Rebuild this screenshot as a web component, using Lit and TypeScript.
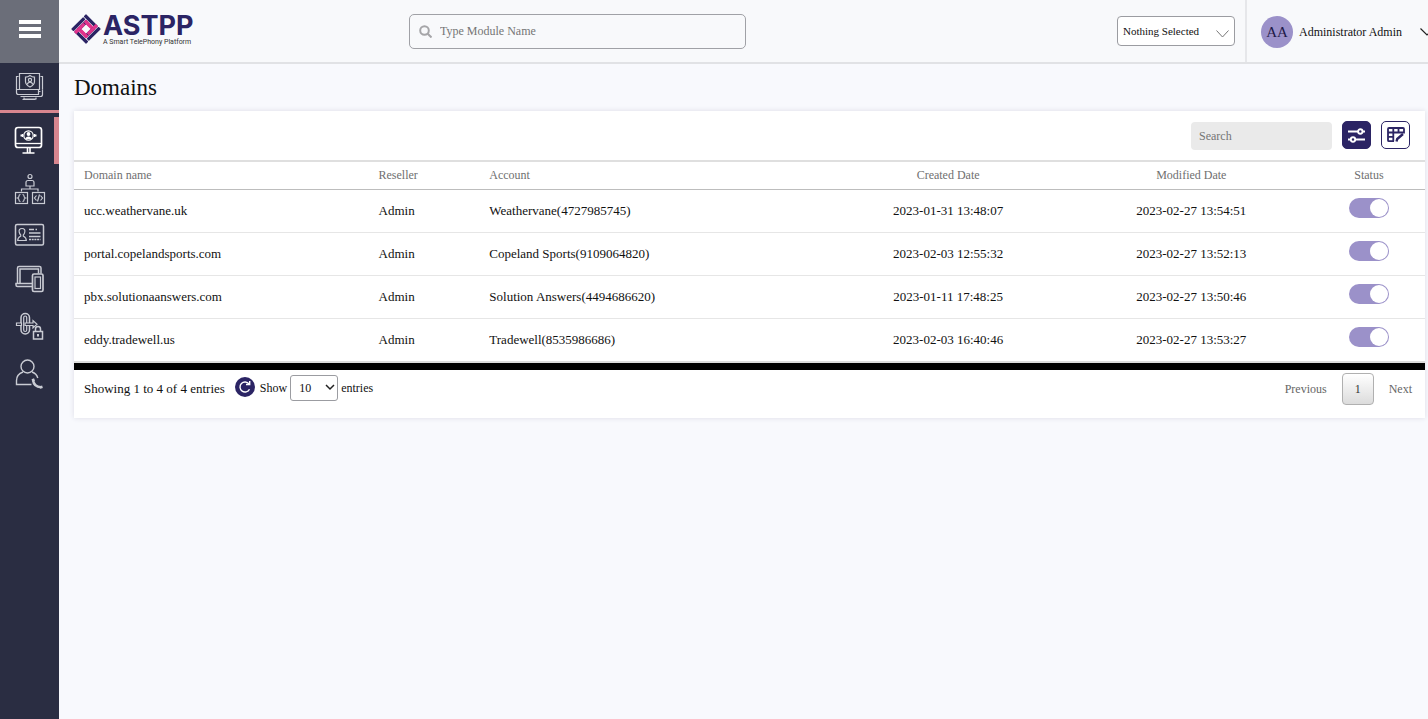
import { LitElement, html, css, svg } from "lit";
import { customElement, state } from "lit/decorators.js";

interface Domain {
  name: string;
  reseller: string;
  account: string;
  created: string;
  modified: string;
  active: boolean;
}

const DOMAINS: Domain[] = [
  { name: "ucc.weathervane.uk", reseller: "Admin", account: "Weathervane(4727985745)", created: "2023-01-31 13:48:07", modified: "2023-02-27 13:54:51", active: true },
  { name: "portal.copelandsports.com", reseller: "Admin", account: "Copeland Sports(9109064820)", created: "2023-02-03 12:55:32", modified: "2023-02-27 13:52:13", active: true },
  { name: "pbx.solutionaanswers.com", reseller: "Admin", account: "Solution Answers(4494686620)", created: "2023-01-11 17:48:25", modified: "2023-02-27 13:50:46", active: true },
  { name: "eddy.tradewell.us", reseller: "Admin", account: "Tradewell(8535986686)", created: "2023-02-03 16:40:46", modified: "2023-02-27 13:53:27", active: true },
];

// Each drawing uses a 59 x 47 box, the size of one sidebar entry.
const NAV = [
  {
    label: "Dashboard",
    art: svg`
      <path d="M19.500 11.500v-1h20v16h-20z M18.500 13.500h-2v13 M40.500 13.500h2v13"/>
      <path d="M16.500 26.500h22v5h-20a2 2 0 0 1-2-2z M42.500 26.500v5a2 2 0 0 1-2 2h-20 M38.500 28.500h2"/>
      <path d="M24 34.500v1.500h12v-1.500 M22.500 36.500h13"/>
      <path d="M30 12.500c1.500 1.200 3 1.700 4.500 1.700v4.300c0 2.500-2 4.300-4.500 5.500c-2.500-1.200-4.500-3-4.500-5.500v-4.300c1.500 0 3-.5 4.500-1.700z"/>
      <circle cx="30" cy="17" r="1.600"/><path d="M27.500 21.500c0-3 5-3 5 0"/>`,
  },
  {
    label: "Accounts",
    art: svg`
      <rect x="15.500" y="10.500" width="26" height="20" rx="2.500" stroke-width="1.700"/>
      <path d="M15.500 26.500h26" stroke-width="1.300"/>
      <path d="M27.500 31v4.500M30 31v4.500M22.500 36h12" stroke-width="1.600"/>
      <circle cx="28.500" cy="18.500" r="4.700"/><circle cx="28.500" cy="17" r="1.900" fill="#fff" stroke="none"/>
      <path d="M25.300 22c0-3.500 6.400-3.500 6.400 0z" fill="#fff" stroke="none"/>
      <path d="M20.500 18.500h2.500M34 18.500h2.500" stroke-width="2"/><path d="M22.500 17v3M34.500 17v3"/>`,
  },
  {
    label: "Services",
    art: svg`
      <circle cx="30" cy="12.500" r="2"/>
      <path d="M26 22v-3.500a2 2 0 0 1 2-2h4a2 2 0 0 1 2 2v3.500z"/>
      <path d="M30 22v3M21.500 27.500v-2.500h16.500v2.500"/>
      <rect x="15.500" y="28.500" width="12" height="11"/><rect x="32.500" y="28.500" width="12" height="11"/>
      <path d="M20.500 30.500q-1.500 0-1.500 1.500t-1.500 2q1.500.5 1.500 2t1.500 1.500M22.500 30.500q1.500 0 1.500 1.500t1.500 2q-1.500.5-1.500 2t-1.500 1.500"/>
      <path d="M36.500 31.500l-2 2.500l2 2.500M40.500 31.500l2 2.500l-2 2.500M39.500 30.500l-2 7"/>`,
  },
  {
    label: "Cards",
    art: svg`
      <rect x="15.500" y="13.500" width="28" height="20.500" rx="1.500" stroke-width="1.500"/>
      <path d="M22 17.500c-2.600 0-3.200 1.700-2.800 3.500c.3 1.500.8 2.400 1.500 3v1.200c-1.700.8-3 1.300-3 4.300h8.600c0-3-1.300-3.500-3-4.300v-1.200c.7-.6 1.200-1.500 1.500-3c.4-1.800-.2-3.500-2.800-3.500z"/>
      <path d="M29 18.500h5M35.500 18.500h1.500M29 22h11.500M29 25.500h11.500" stroke-width="1.500"/>
      <path d="M29 28.500h11.500" stroke-width="1.500" stroke-dasharray="2 .7"/>`,
  },
  {
    label: "Devices",
    art: svg`
      <path d="M17.500 25v-15a1.500 1.500 0 0 1 1.500-1.500h20.500a1.500 1.500 0 0 1 1.500 1.500v5.500M20 25v-14h18.500v4.500" stroke-width="1.500"/>
      <path d="M32.500 25.500h-16.500v1.500a1.500 1.500 0 0 0 1.500 1.500h15" stroke-width="1.500"/>
      <rect x="32.500" y="16" width="10.500" height="17.500" rx="1.500" stroke-width="1.700"/>
      <rect x="35" y="19" width="5.500" height="11.500"/>`,
  },
  {
    label: "Routing",
    art: svg`
      <rect x="21" y="8.500" width="8.500" height="20.500" rx="4.200" stroke-width="1.500"/><rect x="23.700" y="11" width="3" height="15.500" rx="1.500"/>
      <path d="M16.500 18h5v2.500h-5z M25 18h8v-2.500l4 3.700l-4 3.700v-2.400h-8z" fill="#2a2d42"/>
      <rect x="33.500" y="26.500" width="9" height="7.500" stroke-width="1.500"/><path d="M35.500 26.500v-2.500a2.500 2.500 0 0 1 5 0v2.500" stroke-width="1.500"/>
      <path d="M38 29v2.500" stroke-width="2"/>`,
  },
  {
    label: "Support",
    art: svg`
      <circle cx="27.500" cy="14.500" r="6.500" stroke-width="1.400"/>
      <path d="M23 20c-4 1.500-6.500 4.500-6.500 8.500v4h15M32 20c3 1 5 3 5.800 6" stroke-width="1.400"/>
      <path d="M33 28c.5 4 3.500 7 8 7.300" stroke-width="2.400"/><path d="M32 28.500l2.500-1M40 35.500l2.500-.8" stroke-width="2.500"/>`,
  },
];

@customElement("app-root")
export class AppRoot extends LitElement {
  @state() private rows: Domain[] = DOMAINS;

  static styles = css`
    :host {
      display: grid;
      grid-template-columns: 59px minmax(0, 1fr);
      min-height: 100vh;
      background: #f8f9fd;
      color: #111;
      font: 13px/16px "Liberation Serif", "Times New Roman", serif;
    }
    * { box-sizing: border-box; }
    button, input, select { font: inherit; color: inherit; margin: 0; }
    button { padding: 0; cursor: pointer; }
    svg { display: block; flex: none; }

    .sidebar { background: #2a2d42; }
    .menu {
      display: grid;
      place-items: center;
      width: 100%;
      height: 63px;
      padding-bottom: 5px;
      border: 0;
      background: #6b6e79;
    }
    .nav { display: flex; flex-direction: column; margin: 0; padding: 0; list-style: none; }
    .nav-item:first-child { border-bottom: 3px solid #d8868f; margin-bottom: 4px; }
    .nav-link { display: block; height: 47px; overflow: hidden; }
    .nav-link.current { border-right: 5px solid #d8868f; }
    .nav-link svg { fill: none; stroke: #c9cbd3; stroke-width: 1.200; }
    .nav-link.current svg { stroke: #fff; }

    .header {
      display: flex;
      align-items: center;
      height: 64px;
      border-bottom: 2px solid #e1e2e5;
      background: #f8f9fb;
      overflow: hidden;
    }
    .brand {
      display: flex;
      flex: 0 0 350px;
      gap: 2px;
      padding: 0 0 3px 12px;
      color: #2b2464;
      text-decoration: none;
      font-family: Inter, sans-serif;
    }
    .brand-text { display: flex; flex-direction: column; }
    .brand-name { font-weight: 700; font-size: 27px; line-height: 24px; }
    .tagline { font: 400 7px/8px Roboto, sans-serif; color: #333; white-space: nowrap; }
    .module-search {
      display: flex;
      align-items: center;
      gap: 8px;
      width: 337px;
      height: 35px;
      padding: 0 9px;
      border: 1px solid #a0a1a6;
      border-radius: 5px;
      font-size: 12px;
    }
    .module-search input {
      flex: 1;
      min-width: 0;
      padding: 0;
      border: 0;
      background: none;
      outline: 0;
    }
    input::placeholder { color: #757575; opacity: 1; }
    .picker { display: grid; margin: 0 10px 0 auto; }
    .picker select, .picker svg { grid-area: 1 / 1; }
    .picker svg { justify-self: end; align-self: center; margin: 6px 6px 0 0; pointer-events: none; }
    select { appearance: none; background: #fff; border: 1px solid #9b9ca1; outline: 0; font-size: 12px; }
    .picker select { width: 118px; height: 30px; padding: 0 5px; border-radius: 4px; font-size: 11px; }
    .user {
      display: flex;
      align-items: center;
      width: 183px;
      height: 62px;
      padding: 2px 0 0 14px;
      border: 0;
      border-left: 2px solid #e6e7ea;
      background: none;
      font-size: 12px;
      overflow: hidden;
      white-space: nowrap;
    }
    .avatar {
      flex: none;
      width: 32px;
      margin-right: 6px;
      border-radius: 50%;
      background: #9b91c9;
      color: #1f1a48;
      font-size: 15px;
      line-height: 32px;
    }
    .user svg { margin-left: 18px; }

    .content { padding: 10px 3px 0 15px; }
    .title { margin: 0 0 9px; font-weight: 400; font-size: 23px; line-height: 28px; }
    .card { background: #fff; box-shadow: 0 0 5px #dcdde6; }
    .toolbar { display: flex; justify-content: flex-end; gap: 10px; height: 49px; padding: 10px 15px 0 0; }
    .filter {
      width: 141px;
      height: 28px;
      margin-top: 1px;
      padding: 0 8px;
      border: 0;
      border-radius: 4px;
      background: #eaeaea;
      font-size: 12px;
    }
    .tool {
      display: grid;
      place-items: center;
      width: 29px;
      height: 28px;
      border: 1px solid #2b2464;
      border-radius: 5px;
      background: #fff;
      color: #2b2464;
    }
    .tool.solid { background: #2b2464; color: #fff; }

    .domains {
      width: 100%;
      table-layout: fixed;
      border-collapse: separate;
      border-spacing: 0;
      border-top: 2px solid #dfdfdf;
      border-bottom: 7px solid #000;
    }
    .domains th, .domains td { padding: 0 10px; text-align: left; font-weight: 400; }
    .domains th { height: 28px; padding-bottom: 2px; border-bottom: 1px solid #bdbdbd; color: #6f6f6f; font-size: 12px; }
    .domains td { height: 43px; border-bottom: 1px solid #e6e6e6; }
    .domains tr:last-child td { height: 44px; border-bottom: 2px solid #dcdcdc; }
    .domains .mid { text-align: center; }
    .domains td.state { padding-top: 8px; text-align: center; vertical-align: top; }
    .w-name { width: 21.800%; }
    .w-reseller { width: 8.200%; }
    .w-date { width: 18%; }
    .w-status { width: 8.300%; }
    .toggle {
      appearance: none;
      display: block;
      width: 40px;
      height: 20px;
      margin: 0 auto;
      padding: 1px;
      border-radius: 10px;
      background: #c9c9cf;
      cursor: pointer;
    }
    .toggle::before { content: ""; display: block; width: 18px; height: 18px; border-radius: 50%; background: #fff; }
    .toggle:checked { background: #9b91c9; }
    .toggle:checked::before { margin-left: auto; }

    .footer { display: flex; align-items: center; height: 48px; padding: 0 13px 11px 10px; }
    .refresh {
      display: grid;
      place-items: center;
      width: 20px;
      height: 20px;
      margin: 0 5px 4px 10px;
      border: 0;
      border-radius: 50%;
      background: #2b2464;
    }
    .length { display: flex; align-items: center; gap: 3px; padding-bottom: 2px; font-size: 12px; }
    .length-box { display: grid; }
    .length-box select, .length-box svg { grid-area: 1 / 1; }
    .length-box svg { justify-self: end; align-self: center; margin-right: 3px; pointer-events: none; }
    .length select { width: 48px; height: 26px; padding: 0 8px; border-radius: 3px; }
    .pager { display: flex; align-items: center; gap: 15px; margin-left: auto; color: #666; font-size: 12px; }
    .pager button { border: 0; background: none; }
    .pager .page {
      width: 32px;
      height: 32px;
      border: 1px solid #b0b0b0;
      border-radius: 4px;
      background: linear-gradient(#fff, #dcdcdc);
      color: #333;
    }
  `;

  private toggle(row: Domain) {
    this.rows = this.rows.map((r) => (r === row ? { ...r, active: !r.active } : r));
  }

  private logo() {
    return html`<svg width="30" height="30" viewBox="-15 -15 30 30" aria-hidden="true">
      <g transform="rotate(45)">
        ${[0, 90, 180, 270].map((a) => svg`<g transform="rotate(${a})">
          <rect x="-10.500" y="-10.500" width="17" height="3.300" rx=".6" fill="#2b2464"/>
          <rect x="-6.600" y="-6.600" width="13.100" height="3.300" rx=".6" fill="${a % 180 ? "#2b2464" : "#e0338c"}"/>
        </g>`)}
        <rect x="-6.600" y="-6.600" width="9.500" height="3.300" rx=".6" fill="#e0338c"/>
        <rect x="-2.900" y="3.300" width="9.500" height="3.300" rx=".6" fill="#e0338c"/>
        <rect x="3.300" y="-10.500" width="3.300" height="13.100" rx=".6" fill="#e0338c"/>
        <rect x="-6.600" y="-2.600" width="3.300" height="13.100" rx=".6" fill="#e0338c"/>
      </g>
    </svg>`;
  }

  render() {
    return html`
      <aside class="sidebar">
        <button class="menu" aria-label="Menu">
          <svg width="22" height="18" viewBox="0 0 22 18" fill="#fff"><path d="M0 0h22v4H0zM0 7h22v4H0zM0 14h22v4H0z"/></svg>
        </button>
        <nav>
          <ul class="nav">
            ${NAV.map((n, i) => html`<li class="nav-item">
              <a class="nav-link ${i === 1 ? "current" : ""}" href="#" aria-label=${n.label}>
                <svg width="59" height="47" viewBox="0 0 59 47">${n.art}</svg>
              </a>
            </li>`)}
          </ul>
        </nav>
      </aside>
      <div class="page-body">
        <header class="header">
          <a class="brand" href="#">
            ${this.logo()}
            <span class="brand-text">
              <span class="brand-name">ASTPP</span>
              <span class="tagline">A Smart TelePhony Platform</span>
            </span>
          </a>
          <label class="module-search">
            <svg width="13" height="13" viewBox="0 0 13 13" fill="none" stroke="#a5a5a8" stroke-width="2"><circle cx="5.500" cy="5.500" r="4.300"/><path d="M8.700 8.700L12.500 12.500"/></svg>
            <input type="text" placeholder="Type Module Name" aria-label="Type Module Name" />
          </label>
          <div class="picker">
            <select aria-label="Selection"><option>Nothing Selected</option></select>
            <svg width="13" height="8" viewBox="0 0 13 8" fill="none" stroke="#777"><path d="M.5.5l6 6.500l6-6.500"/></svg>
          </div>
          <button class="user">
            <span class="avatar">AA</span>
            <span>Administrator Admin</span>
            <svg width="14" height="8" viewBox="0 0 14 8" fill="none" stroke="#222" stroke-width="1.200"><path d="M.5.5l6.500 6.500l6.500-6.500"/></svg>
          </button>
        </header>
        <main class="content">
          <h1 class="title">Domains</h1>
          <section class="card">
            <div class="toolbar">
              <input class="filter" type="text" placeholder="Search" aria-label="Search" />
              <button class="tool solid" aria-label="Filter">
                <svg width="17" height="15" viewBox="0 0 17 15" fill="none" stroke="currentColor" stroke-width="1.900"><path d="M0 3.500h10M14.500 3.500h2.500M0 11.500h2.500M7.500 11.500h9.500"/><circle cx="12.300" cy="3.500" r="2.200"/><circle cx="5" cy="11.500" r="2.200"/></svg>
              </button>
              <button class="tool" aria-label="Edit columns">
                <svg width="18" height="16" viewBox="0 0 18 16" fill="none" stroke="currentColor" stroke-width="1.800"><path d="M7 14.200H2a1 1 0 0 1-1-1V2a1 1 0 0 1 1-1h14a1 1 0 0 1 1 1v3.500H1M1 9.800h5.500M6.300 1v13.200M11.500 1v4.500"/><path d="M9.500 14.500l.7-2.500l5.800-5" stroke-width="2.400"/></svg>
              </button>
            </div>
            <table class="domains">
              <colgroup>
                <col class="w-name" /><col class="w-reseller" /><col /><col class="w-date" /><col class="w-date" /><col class="w-status" />
              </colgroup>
              <thead>
                <tr>
                  <th>Domain name</th><th>Reseller</th><th>Account</th>
                  <th class="mid">Created Date</th><th class="mid">Modified Date</th><th class="mid">Status</th>
                </tr>
              </thead>
              <tbody>
                ${this.rows.map((r) => html`<tr>
                  <td>${r.name}</td><td>${r.reseller}</td><td>${r.account}</td>
                  <td class="mid">${r.created}</td><td class="mid">${r.modified}</td>
                  <td class="state"><input class="toggle" type="checkbox" aria-label="Status of ${r.name}" .checked=${r.active} @change=${() => this.toggle(r)} /></td>
                </tr>`)}
              </tbody>
            </table>
            <div class="footer">
              <span>Showing 1 to 4 of 4 entries</span>
              <button class="refresh" aria-label="Refresh">
                <svg width="14" height="14" viewBox="0 0 14 14" fill="none" stroke="#fff" stroke-width="1.400"><path d="M11.500 9.200a5 5 0 1 1-.5-5.200"/><path d="M11.700 1v3.500H8"/></svg>
              </button>
              <label class="length">
                <span>Show</span>
                <span class="length-box">
                  <select><option>10</option><option>25</option><option>50</option></select>
                  <svg width="10" height="7" viewBox="0 0 10 7" fill="none" stroke="#222" stroke-width="1.500"><path d="M1 1l4 4l4-4"/></svg>
                </span>
                <span>entries</span>
              </label>
              <nav class="pager" aria-label="Pages">
                <button>Previous</button><button class="page" aria-current="page">1</button><button>Next</button>
              </nav>
            </div>
          </section>
        </main>
      </div>
    `;
  }
}
